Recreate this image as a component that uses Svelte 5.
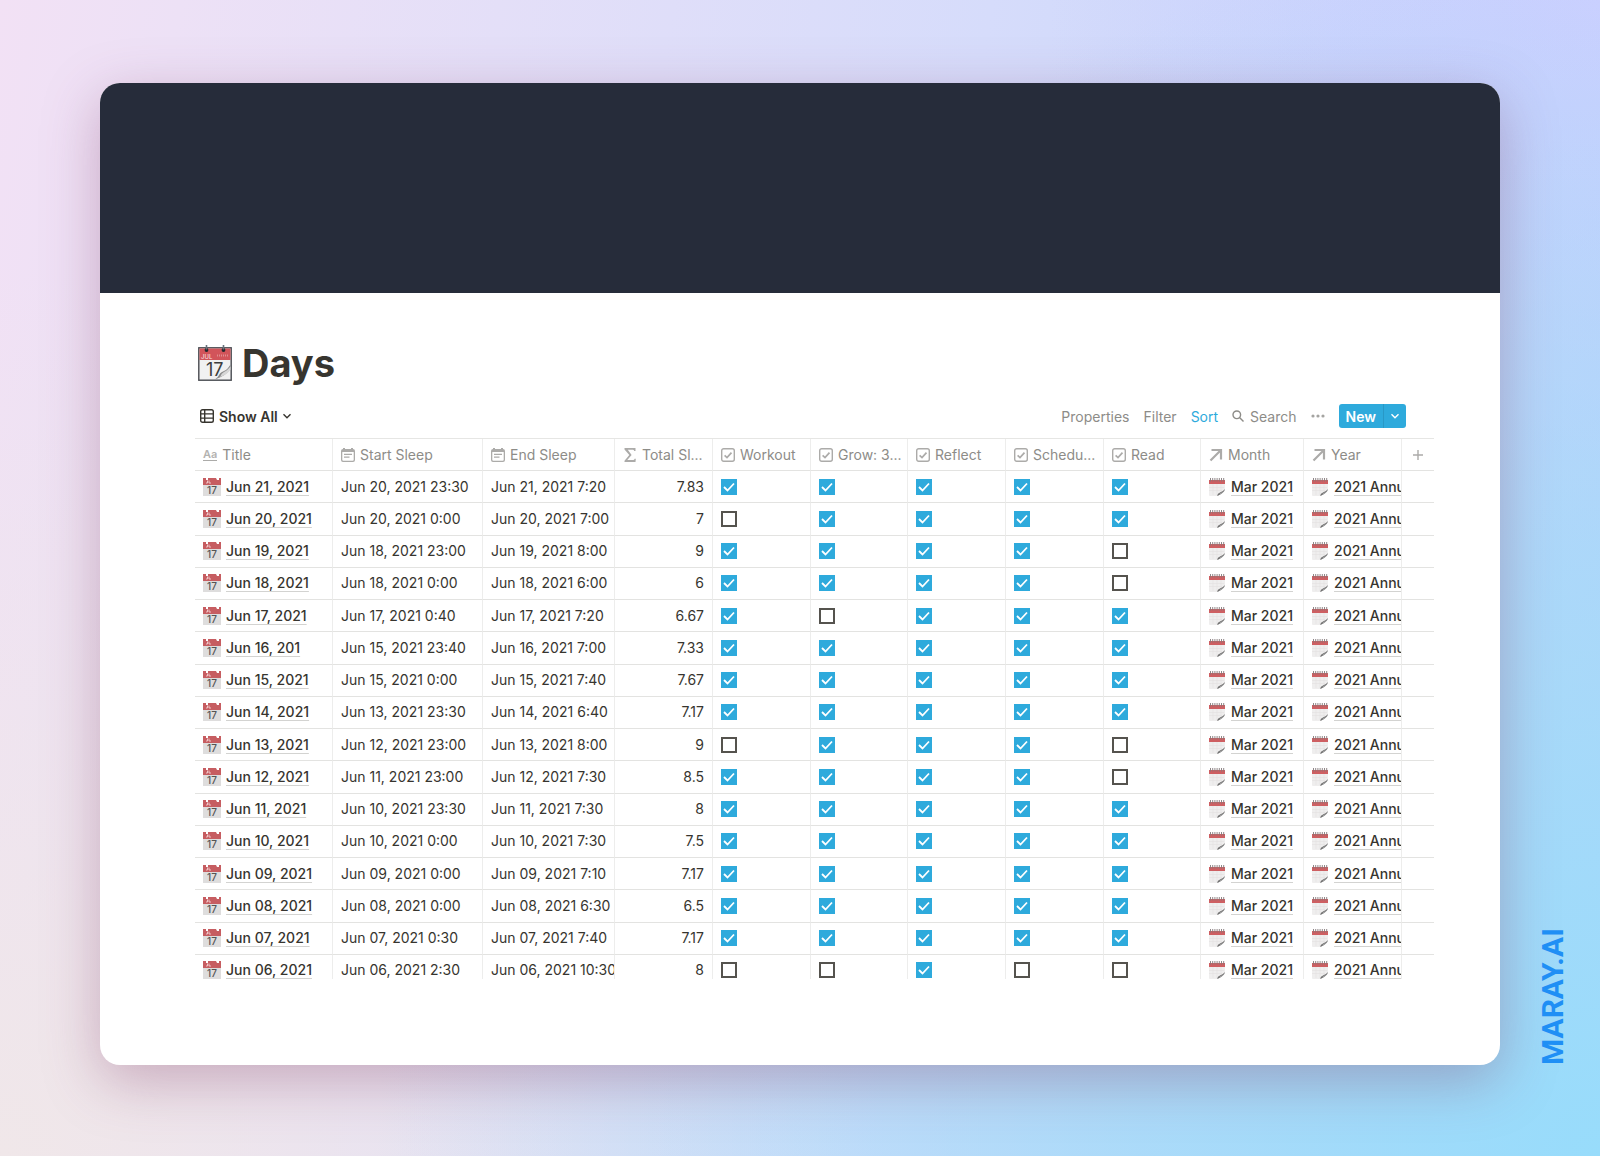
<script lang="ts">
    type IconName = "text" | "date" | "sum" | "check" | "relation";

    const columns: { label: string; icon: IconName; width: number }[] = [
        { label: "Title", icon: "text", width: 138 },
        { label: "Start Sleep", icon: "date", width: 150 },
        { label: "End Sleep", icon: "date", width: 132 },
        { label: "Total Sl...", icon: "sum", width: 98 },
        { label: "Workout", icon: "check", width: 98 },
        { label: "Grow: 3...", icon: "check", width: 97 },
        { label: "Reflect", icon: "check", width: 98 },
        { label: "Schedu...", icon: "check", width: 98 },
        { label: "Read", icon: "check", width: 97 },
        { label: "Month", icon: "relation", width: 103 },
        { label: "Year", icon: "relation", width: 98 },
    ];

    const habits = ["Workout", "Grow", "Reflect", "Schedule", "Read"];

    // done: one flag per habit, in column order
    const days = $state([
        { title: "Jun 21, 2021", start: "Jun 20, 2021 23:30", end: "Jun 21, 2021 7:20", total: "7.83", done: [true, true, true, true, true] },
        { title: "Jun 20, 2021", start: "Jun 20, 2021 0:00", end: "Jun 20, 2021 7:00", total: "7", done: [false, true, true, true, true] },
        { title: "Jun 19, 2021", start: "Jun 18, 2021 23:00", end: "Jun 19, 2021 8:00", total: "9", done: [true, true, true, true, false] },
        { title: "Jun 18, 2021", start: "Jun 18, 2021 0:00", end: "Jun 18, 2021 6:00", total: "6", done: [true, true, true, true, false] },
        { title: "Jun 17, 2021", start: "Jun 17, 2021 0:40", end: "Jun 17, 2021 7:20", total: "6.67", done: [true, false, true, true, true] },
        { title: "Jun 16, 201", start: "Jun 15, 2021 23:40", end: "Jun 16, 2021 7:00", total: "7.33", done: [true, true, true, true, true] },
        { title: "Jun 15, 2021", start: "Jun 15, 2021 0:00", end: "Jun 15, 2021 7:40", total: "7.67", done: [true, true, true, true, true] },
        { title: "Jun 14, 2021", start: "Jun 13, 2021 23:30", end: "Jun 14, 2021 6:40", total: "7.17", done: [true, true, true, true, true] },
        { title: "Jun 13, 2021", start: "Jun 12, 2021 23:00", end: "Jun 13, 2021 8:00", total: "9", done: [false, true, true, true, false] },
        { title: "Jun 12, 2021", start: "Jun 11, 2021 23:00", end: "Jun 12, 2021 7:30", total: "8.5", done: [true, true, true, true, false] },
        { title: "Jun 11, 2021", start: "Jun 10, 2021 23:30", end: "Jun 11, 2021 7:30", total: "8", done: [true, true, true, true, true] },
        { title: "Jun 10, 2021", start: "Jun 10, 2021 0:00", end: "Jun 10, 2021 7:30", total: "7.5", done: [true, true, true, true, true] },
        { title: "Jun 09, 2021", start: "Jun 09, 2021 0:00", end: "Jun 09, 2021 7:10", total: "7.17", done: [true, true, true, true, true] },
        { title: "Jun 08, 2021", start: "Jun 08, 2021 0:00", end: "Jun 08, 2021 6:30", total: "6.5", done: [true, true, true, true, true] },
        { title: "Jun 07, 2021", start: "Jun 07, 2021 0:30", end: "Jun 07, 2021 7:40", total: "7.17", done: [true, true, true, true, true] },
        { title: "Jun 06, 2021", start: "Jun 06, 2021 2:30", end: "Jun 06, 2021 10:30", total: "8", done: [false, false, true, false, false] },
    ]);
</script>

{#snippet columnIcon(name: IconName)}
    {#if name === "text"}
        <span class="aa" aria-hidden="true">Aa</span>
    {:else}
        <svg class="type-icon" viewBox="0 0 14 14" aria-hidden="true">
            {#if name === "date"}
                <path
                    fill="currentColor"
                    fill-rule="evenodd"
                    d="M2 1V0h2v1h6V0h2v1a2 2 0 0 1 2 2v9a2 2 0 0 1-2 2H2a2 2 0 0 1-2-2V3a2 2 0 0 1 2-2ZM1.300 4v7.700q0 1 1 1h9.400q1 0 1-1V4ZM3 5.800h8V7H3ZM3 8.600h5.500v1.200H3Z"
                />
            {:else if name === "sum"}
                <path fill="currentColor" d="M1.500 0h11v3h-1.300q-.2-1.200-1.400-1.200H4.800L8.600 7l-4.300 5.100h5.900q1.200 0 1.400-1.400h1.200L12.500 14h-11v-1.300L6.300 7 1.500 1.400Z" />
            {:else if name === "check"}
                <rect x=".7" y=".7" width="12.600" height="12.600" rx="2" fill="none" stroke="currentColor" stroke-width="1.400" />
                <path d="M3.600 7.300 6 9.600l4.500-5" fill="none" stroke="currentColor" stroke-width="1.700" />
            {:else}
                <path d="M1.500 12.500 11.500 2.500M2.500 2H12v9.500" fill="none" stroke="currentColor" stroke-width="2.200" />
            {/if}
        </svg>
    {/if}
{/snippet}

{#snippet tearOff()}
    <svg class="emoji" viewBox="0 0 18 18" aria-hidden="true">
        <path fill="#dedddd" d="M0 6h18v12H0Z" />
        <path fill="#c65d61" d="M0 0h18v7H0Z" />
        <path fill="#fff" d="M3 0h2v2H3ZM13 0h3v2h-2Z" />
        <path d="M3 5h1.500V2.500M6 2.500V5h2" stroke="#efc3c4" fill="none" />
        <text x="9" y="16" text-anchor="middle">17</text>
    </svg>
{/snippet}

{#snippet spiral()}
    <svg class="emoji spiral" viewBox="0 0 16 18" aria-hidden="true">
        <path fill="#efeeee" d="M0 3h16v8l-7 7H1q-1 0-1-1Z" />
        <path d="M0 9.500h15M0 12.500h13M4 6v11M8 6v11M12 6v8" stroke="#e2e1e1" stroke-width=".6" />
        <path fill="#ce5f62" d="M0 2h16v4H0Z" />
        <path d="M1.500 0v3.500M3.700 0v3.500M5.900 0v3.500M8.100 0v3.500M10.300 0v3.500M12.500 0v3.500M14.700 0v3.500" stroke="#85797a" stroke-width=".9" />
        <path fill="#6f6f6f" d="M8 18q.5-3 3-3.500t5-3.500q-.5 4-8 7Z" />
        <path fill="#b9b9b9" d="M10 16.500q1-1.500 3-2l2-1.400q-1.500 2.400-5 3.400Z" />
    </svg>
{/snippet}

<div class="page">
    <main class="card">
        <div class="cover"></div>
        <div class="body">
            <h1>
                <svg class="page-icon" viewBox="0 0 34 36" aria-hidden="true">
                    <rect x=".8" y="2.800" width="32.400" height="32.400" fill="#f1f1f1" stroke="#484b50" stroke-width="1.400" />
                    <path fill="#d2545a" d="M1.500 3.500h31V15h-31Z" />
                    <path d="M19 10.500h11.500" stroke="#e08d90" stroke-width="2" stroke-dasharray="1 1" />
                    <text class="month" x="3" y="13.500">JUL</text>
                    <text class="date" x="8" y="30.500">17</text>
                    <path fill="#8b8b8b" d="M17 34.500q3-2 5-6 1-1.500 4-2.500t6.500-6.500v4q-4 7-15.500 11Z" />
                    <path fill="#d7d7d7" d="M22 32q1.500-4 4-5t6.500-5.500v3q-3 5-10.500 7.500Z" />
                    <circle cx="8.500" cy="5" r="1.900" fill="#24282d" />
                    <circle cx="25.500" cy="5" r="1.900" fill="#24282d" />
                    <path d="M8.500 0v4.500M25.500 0v4.500" stroke="#68717b" stroke-width="1.600" />
                </svg>
                Days
            </h1>

            <div class="toolbar">
                <button class="view">
                    <svg width="14" height="14" viewBox="0 0 14 14" aria-hidden="true">
                        <rect x=".7" y=".7" width="12.600" height="12.600" rx="1.800" />
                        <path d="M.7 4.900h12.600M.7 9.100h12.600M4.700 .7v12.600" />
                    </svg>
                    Show All
                    <svg width="8" height="8" viewBox="0 0 8 8" aria-hidden="true"><path d="m.5 2.300 3.500 3.500 3.500-3.500" /></svg>
                </button>
                <div class="actions">
                    <button>Properties</button>
                    <button>Filter</button>
                    <button class="active">Sort</button>
                    <button class="search">
                        <svg width="12" height="12" viewBox="0 0 12 12" aria-hidden="true">
                            <circle cx="4.800" cy="4.800" r="3.800" />
                            <path d="m7.500 7.500 4 4" />
                        </svg>
                        Search
                    </button>
                    <button class="more" aria-label="More">
                        <svg width="14" height="4" viewBox="0 0 14 4" aria-hidden="true">
                            <circle cx="2" cy="2" r="1.600" /><circle cx="7" cy="2" r="1.600" /><circle cx="12" cy="2" r="1.600" />
                        </svg>
                    </button>
                    <div class="new">
                        <button>New</button>
                        <button class="new-menu" aria-label="New options">
                            <svg width="8" height="8" viewBox="0 0 8 8" aria-hidden="true"><path d="m.5 2.300 3.500 3.500 3.500-3.500" /></svg>
                        </button>
                    </div>
                </div>
            </div>

            <div class="table-view">
                <table>
                    <colgroup>
                        {#each columns as column}
                            <col style="width: {column.width}px" />
                        {/each}
                        <col style="width: 32px" />
                    </colgroup>
                    <thead>
                        <tr>
                            {#each columns as column}
                                <th scope="col">
                                    <div class="heading">
                                        {@render columnIcon(column.icon)}
                                        {column.label}
                                    </div>
                                </th>
                            {/each}
                            <th class="add">
                                <button aria-label="Add property">
                                    <svg width="10" height="10" viewBox="0 0 10 10" aria-hidden="true"><path d="M5 0v10M0 5h10" /></svg>
                                </button>
                            </th>
                        </tr>
                    </thead>
                    <tbody>
                        {#each days as day}
                            <tr>
                                <td><div class="page-link">{@render tearOff()}<a href="#day">{day.title}</a></div></td>
                                <td>{day.start}</td>
                                <td>{day.end}</td>
                                <td class="number">{day.total}</td>
                                {#each habits as habit, i}
                                    <td><input type="checkbox" aria-label="{habit}, {day.title}" bind:checked={day.done[i]} /></td>
                                {/each}
                                <td><div class="page-link relation">{@render spiral()}<a href="#month">Mar 2021</a></div></td>
                                <td><div class="page-link relation">{@render spiral()}<a href="#year">2021 Annual</a></div></td>
                                <td></td>
                            </tr>
                        {/each}
                    </tbody>
                </table>
            </div>
        </div>
    </main>
    <aside>MARAY.AI</aside>
</div>

<style>
    :global(body) {
        margin: 0;
    }

    .page {
        box-sizing: border-box;
        display: flex;
        min-height: 100vh;
        padding: 83px 0 91px 100px;
        font-family: Inter, "Liberation Sans", sans-serif;
        font-size: 14px;
        color: #37352f;
        background:
            radial-gradient(circle at 100% 100%, #98dcfb 0%, rgba(160, 220, 248, 0.7) 25%, rgba(190, 222, 245, 0) 62%),
            radial-gradient(circle at 0% 100%, #f0e7e9 0%, rgba(240, 231, 233, 0) 45%),
            radial-gradient(circle at 100% 0%, #cccfff 0%, rgba(204, 207, 255, 0) 28%),
            linear-gradient(100deg, #f2e1f5 0%, #ede1f6 10%, #d6dcfb 55%, #bacffc 100%);
    }

    .card {
        flex: 1;
        min-width: 0;
        overflow: hidden;
        border-radius: 20px;
        background: #fff;
        box-shadow: 0 16px 56px rgba(130, 60, 100, 0.35);
    }

    .cover {
        height: 210px;
        background: #262c3a;
    }

    .body {
        padding: 49px 66px 86px 95px;
    }

    h1 {
        display: flex;
        align-items: center;
        gap: 10px;
        margin: 0;
        padding-left: 3px;
        font-size: 38px;
        line-height: 42px;
        font-weight: 700;
    }

    .page-icon {
        width: 34px;
        height: 36px;
    }

    .page-icon .month {
        font-size: 6px;
        font-weight: 500;
        fill: #f6dcdd;
    }

    .page-icon .date {
        font-size: 18px;
        font-weight: 400;
        fill: #3d3d3d;
    }

    button {
        display: flex;
        align-items: center;
        padding: 0;
        border: 0;
        background: none;
        font: inherit;
        color: inherit;
        cursor: pointer;
    }

    .toolbar {
        display: flex;
        justify-content: space-between;
        align-items: center;
        height: 24px;
        margin: 20px 28px 10px 5px;
    }

    svg {
        flex: none;
    }

    .toolbar svg {
        fill: none;
        stroke: currentColor;
        stroke-width: 1.4;
    }

    .view {
        gap: 5px;
        font-weight: 600;
    }

    .actions {
        display: flex;
        align-items: center;
        gap: 14px;
        color: #8d8c88;
    }

    .actions .active {
        color: #2eaadc;
    }

    .search {
        gap: 6px;
    }

    .more svg {
        fill: #a5a4a1;
        stroke: none;
    }

    .new {
        display: flex;
        height: 24px;
        border-radius: 3px;
        overflow: hidden;
        background: #2eaadc;
        color: #fff;
        font-weight: 600;
    }

    .new button {
        padding: 0 7px;
    }

    .new .new-menu {
        border-left: 1px solid #2898c6;
    }

    /* the last row runs past the bottom edge of the view */
    .table-view {
        height: 541px;
        overflow: hidden;
    }

    table {
        width: 100%;
        height: 549px;
        table-layout: fixed;
        border-collapse: separate;
        border-spacing: 0;
        border-top: 1px solid #e6e6e4;
    }

    th,
    td {
        box-sizing: border-box;
        padding: 0 0 0 8px;
        border-right: 1px solid #ededec;
        border-bottom: 1px solid #e3e3e1;
        overflow: hidden;
        text-align: left;
        vertical-align: middle;
        white-space: nowrap;
        line-height: 20px;
    }

    th:last-child,
    td:last-child {
        border-right: 0;
    }

    th {
        height: 32px;
        font-weight: 400;
        color: #8d8c88;
    }

    td.number {
        padding-right: 8px;
        text-align: right;
    }

    .heading {
        display: flex;
        align-items: center;
        gap: 5px;
    }

    .type-icon {
        width: 14px;
        height: 14px;
        color: #acaba9;
    }

    .aa {
        border-bottom: 1px solid #acaba9;
        font-size: 11px;
        line-height: 12px;
        font-weight: 600;
        color: #b4b3b1;
    }

    th.add {
        padding: 0;
    }

    .add button {
        margin: auto;
    }

    .add svg {
        stroke: #acaba9;
        stroke-width: 1.4;
    }

    .page-link {
        display: flex;
        align-items: center;
        gap: 5px;
    }

    .page-link.relation {
        gap: 6px;
    }

    .page-link a {
        font-weight: 500;
        color: inherit;
        text-decoration: underline 1px #d3d3d1;
        text-decoration-skip-ink: none;
        text-underline-offset: 3px;
    }

    .emoji {
        width: 18px;
        height: 18px;
    }

    .emoji text {
        font-size: 10px;
        font-weight: 500;
        fill: #555;
    }

    .emoji.spiral {
        width: 16px;
    }

    input {
        display: block;
        box-sizing: border-box;
        width: 16px;
        height: 16px;
        margin: 0;
        appearance: none;
        border: 2px solid #55534e;
        background: #fff;
    }

    input:checked {
        border: 0;
        background: #2eaadc url("data:image/svg+xml,%3Csvg xmlns='http://www.w3.org/2000/svg' viewBox='0 0 16 16'%3E%3Cpath d='M3 8l3.500 3.500 6.500-7' fill='none' stroke='white' stroke-width='1.800'/%3E%3C/svg%3E");
    }

    aside {
        display: flex;
        align-items: center;
        width: 100px;
        box-sizing: border-box;
        padding-right: 6px;
        align-self: flex-end;
        writing-mode: vertical-rl;
        transform: rotate(180deg);
        font-family: Roboto, sans-serif;
        font-size: 30px;
        line-height: 36px;
        font-weight: 700;
        color: #1f8ff5;
    }
</style>
